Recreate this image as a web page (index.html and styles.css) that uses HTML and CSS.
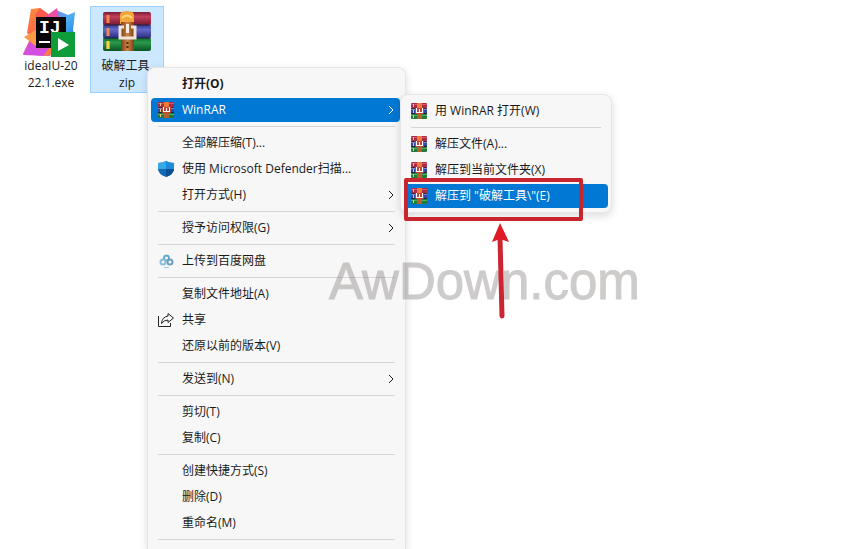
FILE: index.html
```html
<!DOCTYPE html>
<html lang="zh-CN">
<head>
  <meta charset="UTF-8">
  <meta name="viewport" content="width=device-width, initial-scale=1">
  <title>WinRAR</title>
  <link rel="stylesheet" href="styles.css">
</head>
<body>

  <!-- shared icons -->
  <svg class="sprite" aria-hidden="true">
    <symbol id="winrar" viewBox="0 0 16 16">
      <rect x="0" y="0" width="16" height="5" rx="1" fill="#a92c44"/>
      <rect x="0" y="1" width="16" height="1" fill="#d8566b"/>
      <rect x="0" y="5" width="16" height="1" fill="#4b2530"/>
      <rect x="0" y="6" width="16" height="4" fill="#33479f"/>
      <rect x="0" y="6" width="16" height="1" fill="#7a86d6"/>
      <rect x="0" y="10" width="16" height="1" fill="#223"/>
      <rect x="0" y="11" width="16" height="5" rx="1" fill="#217a3b"/>
      <rect x="0" y="12" width="16" height="1" fill="#4fb05e"/>
      <path d="M2.5 1v3M2.5 7v3M2.5 12v3" stroke="#e9c58c"/>
      <rect x="6" y="0" width="5" height="16" fill="#b4622b"/>
      <rect x="6" y="0" width="5" height="5" rx="1" fill="#ee7a3c"/>
      <rect x="4" y="5" width="9" height="6" rx="1" fill="#c2473a"/>
      <path d="M5 5h1v4h2V6h1v3h2V5h1v5H5z" fill="#fff"/>
    </symbol>
    <symbol id="chevron" viewBox="0 0 6 10">
      <path d="M1 1l4 4-4 4" fill="none" stroke="currentColor"/>
    </symbol>
  </svg>

  <main class="desktop">
    <div class="files">
      <button type="button" class="file">
        <svg class="file-icon" viewBox="0 0 60 50" aria-hidden="true">
          <defs>
            <linearGradient id="ideaLeft" x1="0" y1="0" x2="0" y2="1">
              <stop offset="0" stop-color="#fb8a3c"/>
              <stop offset=".55" stop-color="#fb6a4a"/>
              <stop offset="1" stop-color="#e84bd0"/>
            </linearGradient>
            <linearGradient id="ideaRight" x1="0" y1="0" x2="1" y2="1">
              <stop offset="0" stop-color="#8d6bdc"/>
              <stop offset=".5" stop-color="#4fb0f4"/>
              <stop offset="1" stop-color="#1678e0"/>
            </linearGradient>
          </defs>
          <path d="M10 2l9-1 10 9 3 34-10 5-20-2 8-17-4-4z" fill="url(#ideaLeft)"/>
          <path d="M19 1l10 7-10 6-5-6z" fill="#fc5a4c"/>
          <path d="M35 3l12 5 7-3-2 18 2 6-8 6-21-24z" fill="url(#ideaRight)"/>
          <path d="M36 1l2 10-18 2z" fill="#ec4fa5"/>
          <path d="M2 48l9-18 8 12 14-2-4 9z" fill="#d44fe0"/>
          <path d="M3 30l13-8v18z" fill="#fd9a48"/>
          <path d="M22 49l9-12v11z" fill="#fd7a48"/>
          <rect x="15" y="10" width="30" height="31" fill="#0a0506"/>
          <text x="18" y="26" class="idea-letters">IJ</text>
          <rect x="18" y="34" width="11" height="2" fill="#fff"/>
          <rect x="30" y="25" width="24" height="25" fill="#0f9d3a"/>
          <path d="M37 31v13l11-6z" fill="#fff"/>
        </svg>
        <span class="file-name">ideaIU-20<br>22.1.exe</span>
      </button>

      <button type="button" class="file selected">
        <svg class="file-icon" viewBox="0 0 60 50" aria-hidden="true">
          <defs>
            <linearGradient id="bookRed" x1="0" y1="0" x2="0" y2="1">
              <stop offset="0" stop-color="#7d1b35"/>
              <stop offset=".35" stop-color="#c0405c"/>
              <stop offset="1" stop-color="#7a1730"/>
            </linearGradient>
            <linearGradient id="bookBlue" x1="0" y1="0" x2="0" y2="1">
              <stop offset="0" stop-color="#333a96"/>
              <stop offset=".35" stop-color="#6468c8"/>
              <stop offset="1" stop-color="#2b2d7c"/>
            </linearGradient>
            <linearGradient id="bookGreen" x1="0" y1="0" x2="0" y2="1">
              <stop offset="0" stop-color="#0c6b31"/>
              <stop offset=".35" stop-color="#2c9a4c"/>
              <stop offset="1" stop-color="#075323"/>
            </linearGradient>
            <linearGradient id="strap" x1="0" y1="0" x2="1" y2="0">
              <stop offset="0" stop-color="#7d4018"/>
              <stop offset=".5" stop-color="#cc8440"/>
              <stop offset="1" stop-color="#7d4018"/>
            </linearGradient>
          </defs>
          <rect x="6" y="5" width="48" height="13" rx="2" fill="url(#bookRed)"/>
          <rect x="6" y="18" width="48" height="13" rx="2" fill="url(#bookBlue)"/>
          <rect x="6" y="31" width="48" height="13" rx="2" fill="url(#bookGreen)"/>
          <path d="M6 18h48M6 31h48" stroke="#282038"/>
          <path d="M11 8v8M11 21v8M11 34v8" stroke="#f08a4a" stroke-width="3"/>
          <path d="M11 34v8" stroke="#f3d33f" stroke-width="3"/>
          <path d="M23 8q0-4 7-4t7 4v9H23z" fill="#f1a53c"/>
          <path d="M25 11q5-5 10 0" fill="none" stroke="#ffd777" stroke-width="2"/>
          <rect x="24" y="15" width="13" height="29" fill="url(#strap)"/>
          <path d="M27 20h-4v11h15V20h-4" fill="none" stroke="#efe4dc" stroke-width="3"/>
          <path d="M30.5 17v9" stroke="#f6ede4" stroke-width="3"/>
          <path d="M30.5 35v2M30.5 39v2" stroke="#4b2710" stroke-width="2"/>
        </svg>
        <span class="file-name">破解工具.<br>zip</span>
      </button>
    </div>

    <ul class="menu context-menu">
      <li><button type="button" class="item default"><span class="label">打开(O)</span></button></li>
      <li><button type="button" class="item active">
        <svg class="icon" aria-hidden="true"><use href="#winrar"/></svg>
        <span class="label">WinRAR</span>
        <svg class="chevron" aria-hidden="true"><use href="#chevron"/></svg>
      </button></li>
      <li class="separator"></li>
      <li><button type="button" class="item"><span class="label">全部解压缩(T)...</span></button></li>
      <li><button type="button" class="item">
        <svg class="icon" viewBox="0 0 16 16" aria-hidden="true">
          <path d="M8 0q3 2 8 2v6q0 5-8 8-8-3-8-8V2q5 0 8-2z" fill="#1169b4"/>
          <path d="M8 0v8H0V2q5 0 8-2z" fill="#35a8e5"/>
          <path d="M8 0v8h8V2q-5 0-8-2z" fill="#1c8ddb"/>
          <path d="M8 8h8q0 5-8 8z" fill="#0b4f94"/>
        </svg>
        <span class="label">使用 Microsoft Defender扫描...</span>
      </button></li>
      <li><button type="button" class="item">
        <span class="label">打开方式(H)</span>
        <svg class="chevron" aria-hidden="true"><use href="#chevron"/></svg>
      </button></li>
      <li class="separator"></li>
      <li><button type="button" class="item">
        <span class="label">授予访问权限(G)</span>
        <svg class="chevron" aria-hidden="true"><use href="#chevron"/></svg>
      </button></li>
      <li class="separator"></li>
      <li><button type="button" class="item">
        <svg class="icon" viewBox="0 0 16 16" aria-hidden="true">
          <g fill="none" stroke-width="2">
            <circle cx="8.500" cy="5" r="2.500" stroke="#62a9cf"/>
            <circle cx="5" cy="9" r="2.500" stroke="#85bddb"/>
            <circle cx="12" cy="9" r="2.500" stroke="#6f9fc0"/>
          </g>
          <path d="M6 14.500h5" stroke="#9bcbe0"/>
        </svg>
        <span class="label">上传到百度网盘</span>
      </button></li>
      <li class="separator"></li>
      <li><button type="button" class="item"><span class="label">复制文件地址(A)</span></button></li>
      <li><button type="button" class="item">
        <svg class="icon" viewBox="0 0 16 16" aria-hidden="true">
          <path d="M.500 4v10.500h12V11M10 1.500l5.500 4.500L10 10.500V8Q6 8 3.500 11.500 4 5 10 4z" fill="none" stroke="#222" stroke-linejoin="round"/>
        </svg>
        <span class="label">共享</span>
      </button></li>
      <li><button type="button" class="item"><span class="label">还原以前的版本(V)</span></button></li>
      <li class="separator"></li>
      <li><button type="button" class="item">
        <span class="label">发送到(N)</span>
        <svg class="chevron" aria-hidden="true"><use href="#chevron"/></svg>
      </button></li>
      <li class="separator"></li>
      <li><button type="button" class="item"><span class="label">剪切(T)</span></button></li>
      <li><button type="button" class="item"><span class="label">复制(C)</span></button></li>
      <li class="separator"></li>
      <li><button type="button" class="item"><span class="label">创建快捷方式(S)</span></button></li>
      <li><button type="button" class="item"><span class="label">删除(D)</span></button></li>
      <li><button type="button" class="item"><span class="label">重命名(M)</span></button></li>
      <li class="separator"></li>
    </ul>

    <ul class="menu submenu">
      <li><button type="button" class="item">
        <svg class="icon" aria-hidden="true"><use href="#winrar"/></svg>
        <span class="label">用 WinRAR 打开(W)</span>
      </button></li>
      <li class="separator"></li>
      <li><button type="button" class="item">
        <svg class="icon" aria-hidden="true"><use href="#winrar"/></svg>
        <span class="label">解压文件(A)...</span>
      </button></li>
      <li><button type="button" class="item">
        <svg class="icon" aria-hidden="true"><use href="#winrar"/></svg>
        <span class="label">解压到当前文件夹(X)</span>
      </button></li>
      <li><button type="button" class="item active">
        <svg class="icon" aria-hidden="true"><use href="#winrar"/></svg>
        <span class="label">解压到 "破解工具\"(E)</span>
      </button></li>
    </ul>

    <div class="watermark">AwDown.com</div>
    <div class="highlight"></div>
    <svg class="arrow" viewBox="0 0 18 98" aria-hidden="true">
      <path d="M8 16l2 78" stroke="#cc2430" stroke-width="5" stroke-linecap="round"/>
      <path d="M8 1l9 19-9-3-8 3z" fill="#e01b26"/>
    </svg>
  </main>

</body>
</html>
```

FILE: styles.css
```css
* {
  box-sizing: border-box;
}

body {
  margin: 0;
  background: #fff;
  color: #1a1a1a;
  font-family: "Open Sans", "Noto Sans CJK SC", sans-serif;
  font-size: 12px;
}

button {
  border: none;
  background: none;
  padding: 0;
  color: inherit;
  font: inherit;
}

.sprite {
  display: none;
}

.desktop {
  position: relative;
  height: 100vh;
  overflow: hidden;
}

/* desktop files */
.files {
  display: flex;
  gap: 2px;
  padding: 6px 14px;
}

.file {
  display: flex;
  flex-direction: column;
  align-items: center;
  width: 74px;
  height: 87px;
  border: 1px solid transparent;
}

.file.selected {
  background: #cce8ff;
  border-color: #99d1ff;
}

.file-icon {
  width: 60px;
  height: 50px;
}

.file-name {
  line-height: 17px;
}

.idea-letters {
  font: bold 18px "Liberation Mono", monospace;
  fill: #fff;
}

/* menus */
.menu {
  position: absolute;
  margin: 0;
  padding: 3px;
  list-style: none;
  background: #f7f7f7;
  border: 1px solid #e6e6e6;
  border-radius: 8px;
  box-shadow: 0 3px 8px rgba(0, 0, 0, 0.14);
}

.context-menu {
  top: 67px;
  bottom: 0;
  left: 147px;
  width: 259px;
  border-bottom: none;
  border-radius: 8px 8px 0 0;
}

.submenu {
  top: 94px;
  left: 400px;
  width: 212px;
}

.menu li {
  display: flex;
}

.item {
  display: grid;
  grid-template-columns: 16px 1fr 6px;
  column-gap: 8px;
  align-items: center;
  width: 100%;
  height: 24px;
  margin: 1px 0;
  padding: 0 6px 0 7px;
  border-radius: 4px;
  line-height: 18px;
  text-align: left;
}

.context-menu .item {
  width: 249px;
}

.item.default {
  font-weight: bold;
}

.item.active {
  background: #0078d4;
  color: #fff;
}

.icon {
  width: 16px;
  height: 16px;
}

.label {
  grid-column: 2;
  white-space: nowrap;
}

.chevron {
  width: 6px;
  height: 10px;
}

.menu .separator {
  height: 1px;
  margin: 3px 7px;
  background: #d6d6d6;
}

/* annotations over the menus */
.watermark {
  position: absolute;
  top: 253px;
  left: 329px;
  color: #6e6464;
  font: 51px/58px "Liberation Sans", Arial, sans-serif;
  -webkit-text-stroke: 1px #6e6464;
  opacity: 0.33;
}

.highlight {
  position: absolute;
  top: 178px;
  left: 404px;
  width: 179px;
  height: 43px;
  border: 4px solid #c9252f;
  border-radius: 2px;
}

.arrow {
  position: absolute;
  top: 222px;
  left: 492px;
  width: 18px;
  height: 98px;
}
```
